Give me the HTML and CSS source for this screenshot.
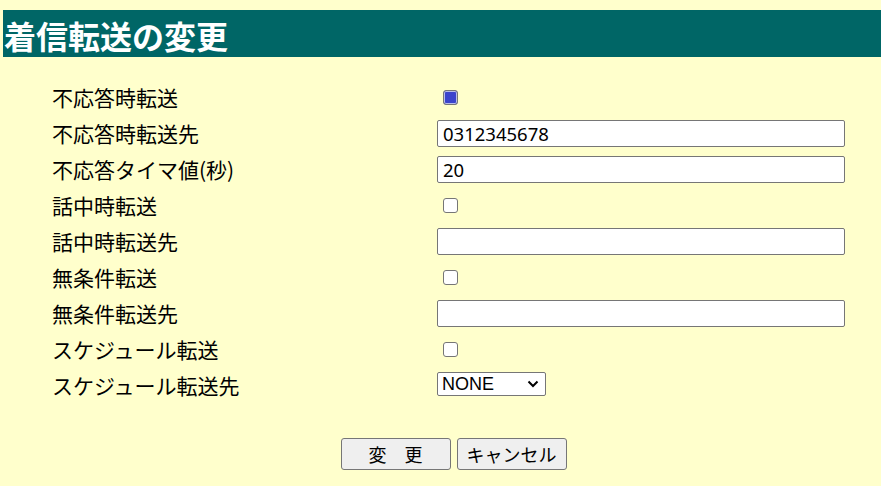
FILE: index.html
```html
<!DOCTYPE html>
<html lang="ja">
<head>
<meta charset="utf-8">
<title>着信転送の変更</title>
<link rel="stylesheet" href="styles.css">
</head>
<body>
<h1 class="title">着信転送の変更</h1>
<form class="form">
  <div class="grid">
    <label class="label">不応答時転送</label>
    <div class="field"><input type="checkbox" class="check" checked></div>
    <label class="label">不応答時転送先</label>
    <div class="field"><input type="text" class="text" value="0312345678"></div>
    <label class="label">不応答タイマ値(秒)</label>
    <div class="field"><input type="text" class="text" value="20"></div>
    <label class="label">話中時転送</label>
    <div class="field"><input type="checkbox" class="check"></div>
    <label class="label">話中時転送先</label>
    <div class="field"><input type="text" class="text" value=""></div>
    <label class="label">無条件転送</label>
    <div class="field"><input type="checkbox" class="check"></div>
    <label class="label">無条件転送先</label>
    <div class="field"><input type="text" class="text" value=""></div>
    <label class="label">スケジュール転送</label>
    <div class="field"><input type="checkbox" class="check"></div>
    <label class="label">スケジュール転送先</label>
    <div class="field">
      <span class="select-wrap">
        <select class="select"><option>NONE</option></select>
        <svg class="chev" width="12" height="8" viewBox="0 0 12 8" aria-hidden="true"><path d="M1.5 1.5 L6 6 L10.5 1.5" fill="none" stroke="#000" stroke-width="2"/></svg>
      </span>
    </div>
  </div>
  <div class="buttons">
    <button type="button" class="btn">変　更</button>
    <button type="button" class="btn">キャンセル</button>
  </div>
</form>
</body>
</html>
```
FILE: styles.css
```css
html, body {
  margin: 0;
  padding: 0;
  background: #ffffcc;
}
body {
  padding: 10px 0 0 3px;
  font-family: "Noto Sans CJK JP", "Noto Sans", sans-serif;
  color: #000;
}
.title {
  margin: 0;
  background: #006666;
  color: #fff;
  font-size: 32px;
  font-weight: bold;
  line-height: 44px;
  padding: 3px 0 0 1px;
}
.form {
  margin: 22px 0 0 49px;
  width: 803px;
}
.grid {
  display: grid;
  grid-template-columns: 385px 408px;
  grid-auto-rows: 36px;
}
.label {
  font-size: 21px;
  display: flex;
  align-items: center;
  line-height: 1;
}
.field {
  display: flex;
  align-items: center;
}
.check {
  appearance: none;
  -webkit-appearance: none;
  width: 15px;
  height: 15px;
  margin: 0 0 0 6px;
  border: 1px solid #767676;
  border-radius: 3px;
  background: #fff;
}
.check:checked {
  background: #3b44cc;
  box-shadow: inset 0 0 0 1px #b9bde8;
}
.text {
  box-sizing: border-box;
  width: 408px;
  height: 27px;
  margin: 0;
  border: 1px solid #767676;
  border-radius: 2px;
  background: #fff;
  padding: 0 5px;
  font-family: "Noto Sans", sans-serif;
  font-size: 18.5px;
  color: #000;
}
.select-wrap {
  position: relative;
  display: block;
  width: 109px;
  height: 24px;
  margin-top: -3px;
}
.select {
  appearance: none;
  -webkit-appearance: none;
  box-sizing: border-box;
  display: block;
  width: 109px;
  height: 24px;
  margin: 0;
  border: 1px solid #767676;
  border-radius: 2px;
  background: #fff;
  font-family: "Liberation Sans", Arial, sans-serif;
  font-size: 18px;
  color: #000;
  padding: 0 4px;
}
.chev {
  position: absolute;
  right: 7px;
  top: 8px;
  pointer-events: none;
}
.buttons {
  display: flex;
  justify-content: center;
  gap: 6px;
  margin-top: 35px;
}
.btn {
  width: 110px;
  height: 32px;
  border: 1px solid #767676;
  border-radius: 3px;
  background: #efefef;
  font-family: "Noto Sans CJK JP", sans-serif;
  font-size: 18px;
  color: #000;
  padding: 0;
  margin: 0;
}
```
